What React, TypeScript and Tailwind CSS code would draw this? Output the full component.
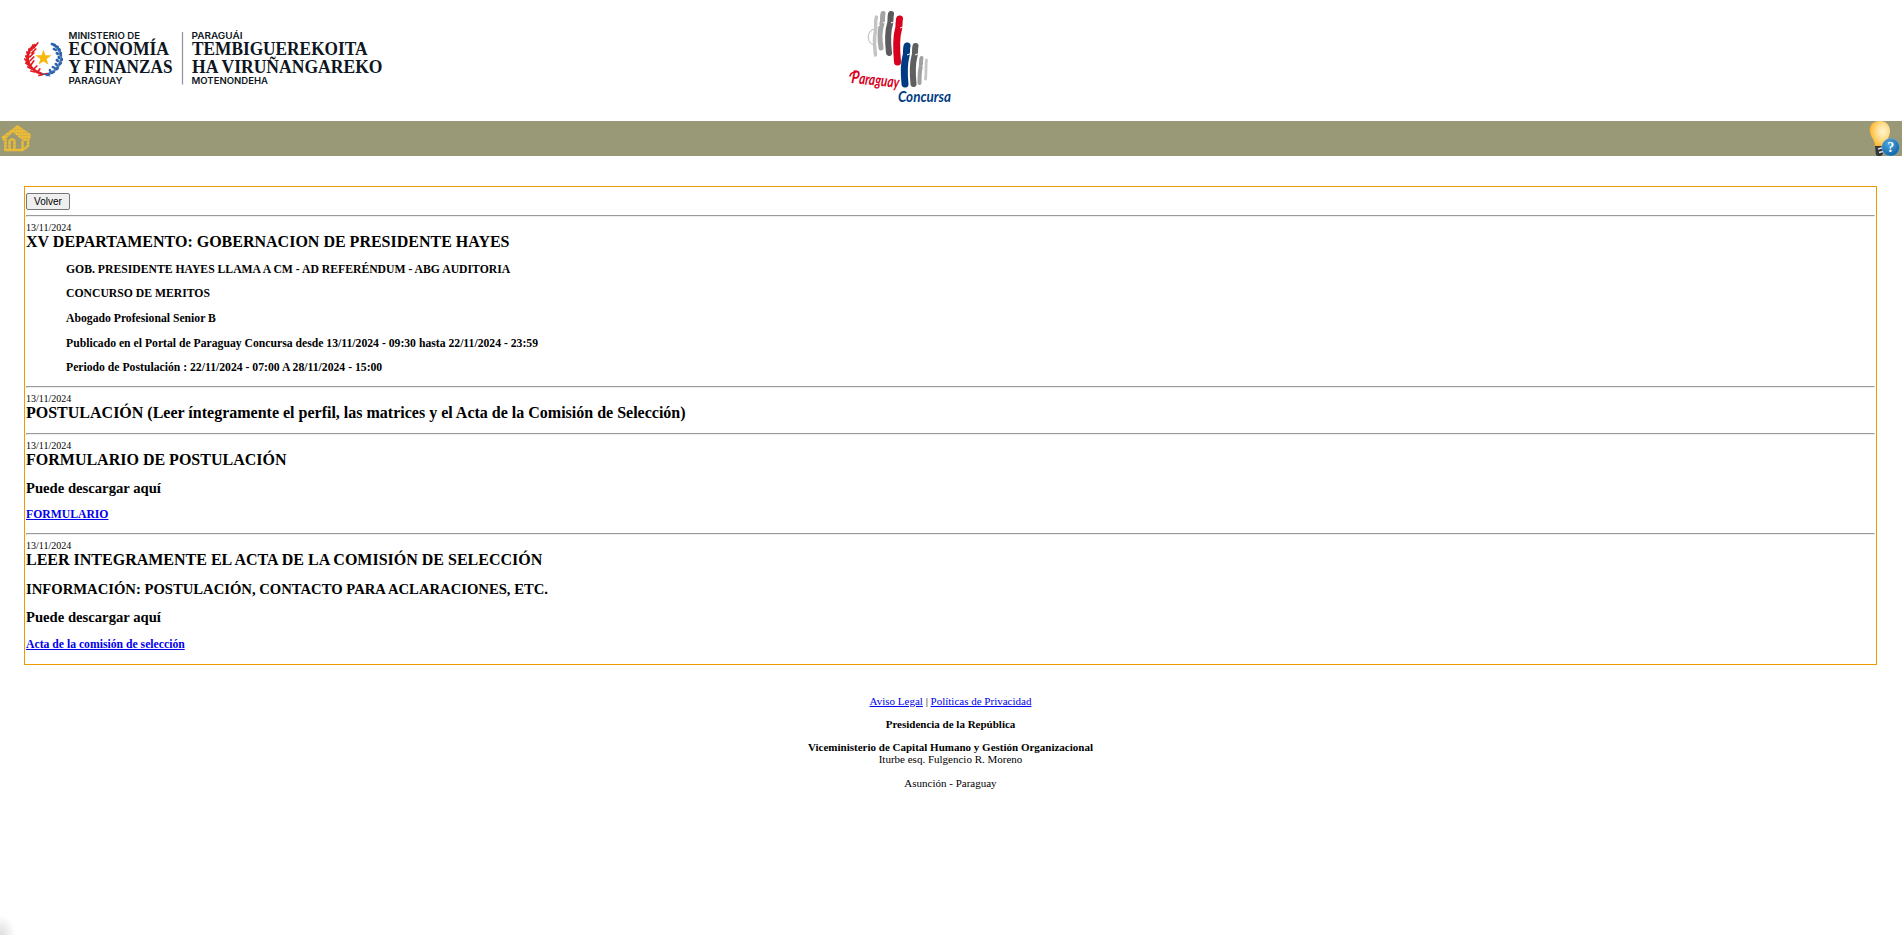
import React from "react";

const serif = "'Liberation Serif', serif";
const sans = "Lato, sans-serif";

function MinistryLogo() {
  return (
    <svg width="370" height="70" viewBox="20 22 370 70" className="block" role="img" aria-label="Ministerio de Economía y Finanzas">
      <g fill="none" strokeLinecap="round" transform="translate(.8 0)">
        <path d="M34 45C23 53 24 68 41 74" stroke="#e31b23" strokeWidth="2.600" />
        <path d="M33 48l4-5M31 50l1-5M29 53l-1-4M28 56l-2-4M27 60l-2-4M27 63l-3-4M29 66l-4-3M31 69l-4-2M34 72l-4-1M31 53l4-4M29 57l4-4M29 61l4-4M30 65l3-4M33 69l3-3M37 72l2-3" stroke="#e31b23" strokeWidth="1.700" />
        <path d="M53 45C64 53 63 68 46 75" stroke="#5d86c2" strokeWidth="2.600" />
        <path d="M51 44l3 1M55 46l2 1M53 49l2 1M58 49l1 1M56 53l1 1M60 53l0 2M58 57l0 1M61 59l0 1M56 60l1 1M60 63l-1 1M55 64l1 1M57 68l-1 1M52 67l2 1M53 72l-2 1M49 70l1 2M47 74l1 0" stroke="#2f62ae" strokeWidth="2.500" />
        <path d="M38 75.500l8-2" stroke="#e31b23" strokeWidth="1.300" />
        <path d="M41 73.500l8 2.500" stroke="#2f62ae" strokeWidth="1.200" />
      </g>
      <path d="M43.500 49.500l1.900 5.800h6.200l-5 3.600 1.900 5.900-5-3.600-5 3.600 1.900-5.900-5-3.600h6.200z" fill="#f8b90c" />
      <g fill="#0d1621" fontFamily="Inter, sans-serif" fontWeight="600" fontSize="8.400">
        <text x="68.500" y="38.500" textLength="71.500" lengthAdjust="spacingAndGlyphs">MINISTERIO DE</text>
        <text x="68.500" y="84.300" textLength="54" lengthAdjust="spacingAndGlyphs">PARAGUAY</text>
        <text x="191.500" y="38.500" textLength="51" lengthAdjust="spacingAndGlyphs">PARAGUÁI</text>
        <text x="191.500" y="84.300" textLength="76.500" lengthAdjust="spacingAndGlyphs">MOTENONDEHA</text>
      </g>
      <g fill="#0d1621" fontFamily={serif} fontWeight="700" fontSize="18">
        <text x="68.500" y="55.300" textLength="100.500" lengthAdjust="spacingAndGlyphs">ECONOMÍA</text>
        <text x="68.500" y="73.200" textLength="104" lengthAdjust="spacingAndGlyphs">Y FINANZAS</text>
        <text x="192" y="55.300" textLength="175.500" lengthAdjust="spacingAndGlyphs">TEMBIGUEREKOITA</text>
        <text x="192" y="73.200" textLength="190.500" lengthAdjust="spacingAndGlyphs">HA VIRUÑANGAREKO</text>
      </g>
      <path d="M182.500 32v52.500" stroke="#8d9297" strokeWidth="1.200" />
    </svg>
  );
}

function ConcursaLogo() {
  return (
    <svg width="120" height="110" viewBox="840 0 120 110" className="block" role="img" aria-label="Paraguay Concursa">
      <g fill="none" strokeLinecap="round">
        <path d="M875 29C866 30 866 44 875 45" stroke="#c9c9c9" strokeWidth="1.300" />
        <path d="M876.500 17c-2 5 0 8-1 14-2 8-1 15 0 24" stroke="#c4c4c4" strokeWidth="3.500" />
        <path d="M883 13.500c-1 5 0 7-1 10-3 8-2 18-1 24.500" stroke="#a4a4a4" strokeWidth="5" />
        <path d="M891 14c-1 4 0 7-1 10-3 9-2 20-1 29" stroke="#5b5b5e" strokeWidth="6" />
        <path d="M899.500 19c-1 4 0 7-1 10-3 10-2 22-1 33" stroke="#d9001d" strokeWidth="7" />
        <path d="M907 46c-1 4 0 7-1 10-2.500 9-2 18-1 28" stroke="#003b84" strokeWidth="7" />
        <path d="M915.500 46c-1 4 0 7-1 10-2.500 9-2 18-1 28" stroke="#5f5f62" strokeWidth="6" />
        <path d="M921.500 58c-1 4 0 7-1 10-1 5-1 10-1 15" stroke="#a0a0a0" strokeWidth="4" />
        <path d="M926.500 60c-1 5 0 10-1 19" stroke="#c6c6c6" strokeWidth="2.800" />
      </g>
      <g fill="none" stroke="#fff" strokeWidth="1">
        <path d="M883 23l4-2M891 23l5-2M900 28l5-2M907 55l5-2M915 55l5-2M922 66l3-1M877 26l3-1" />
      </g>
      <text x="851" y="83" transform="rotate(6 851 83)" textLength="48" lengthAdjust="spacingAndGlyphs" fill="#d9001d" fontFamily={sans} fontStyle="italic" fontWeight="700" fontSize="16"><tspan fontSize="18">P</tspan>araguay</text>
      <path d="M850 76q1-4 6-4" fill="none" stroke="#d9001d" strokeWidth="1.500" strokeLinecap="round" />
      <text x="898" y="102" textLength="53" lengthAdjust="spacingAndGlyphs" fill="#003b84" fontFamily={sans} fontStyle="italic" fontWeight="700" fontSize="14.500">Concursa</text>
    </svg>
  );
}

function HomeIcon() {
  return (
    <svg width="32" height="35" viewBox="0 121 32 35" className="block" aria-label="Inicio">
      <path d="M1.500 137L17.500 125 30.500 134v4.500l-6.500 3-11-9-10 8.500z" fill="#f0bd33" />
      <g fill="none" stroke="#f0bd33" strokeWidth="2.600" strokeLinejoin="round">
        <path d="M5.500 138v12h17v-9M9.500 150v-9q3-4 5 0v9M28 137v9l-5.500 4" />
      </g>
      <path d="M2 129.500h28M2 132.500h28M2 135.500h28M2 138.500h28M2 141.500h28M2 144.500h28M2 147.500h28M6 125v26M9 125v26M12 125v26M15 125v26M18 125v26M21 125v26M24 125v26M27 125v26" stroke="#999977" strokeWidth=".25" />
    </svg>
  );
}

function HelpIcon() {
  return (
    <svg width="34" height="35" viewBox="1868 121 34 35" className="block" aria-label="Ayuda">
      <defs>
        <radialGradient id="bulb" cx=".65" cy=".42" r=".65">
          <stop offset="0" stopColor="#fff6d5" />
          <stop offset=".5" stopColor="#ffdc8a" />
          <stop offset="1" stopColor="#ffb52c" />
        </radialGradient>
        <radialGradient id="ball" cx=".4" cy=".3" r=".7">
          <stop offset="0" stopColor="#4da7dd" />
          <stop offset="1" stopColor="#1464a6" />
        </radialGradient>
      </defs>
      <path d="M1875 146h8v8q-3 4-7 1z" fill="#34353a" />
      <path d="M1878 149l5-1.500M1879 152.500l4-1" stroke="#e5e5e5" strokeWidth="1.500" />
      <path d="M1880 121c-8 0-11 5-10 11 1 6 5 8 5 14h10c1-6 5-9 5-15 0-6-4-10-10-10z" fill="url(#bulb)" />
      <circle cx="1890.700" cy="147.300" r="8.800" fill="url(#ball)" stroke="#6ea9ce" strokeWidth=".7" />
      <text x="1890.700" y="151.800" textAnchor="middle" fill="#fff" fontFamily={serif} fontWeight="700" fontSize="14">?</text>
    </svg>
  );
}

function Rule() {
  return <div className="h-0.5 border border-[#eeeeee] border-t-[#9a9a9a] border-l-[#9a9a9a]" />;
}

function Stamp() {
  return <div className="pt-[5px] text-[10px] leading-[11px]">13/11/2024</div>;
}

function Title({ children }: { children: React.ReactNode }) {
  return <h2 className="text-[16px] leading-[18px] font-bold">{children}</h2>;
}

export default function App() {
  return (
    <div className="relative flex min-h-[935px] flex-col overflow-hidden bg-white font-['Liberation_Serif',serif] text-black">
      <header className="grid h-[121px] grid-cols-[840px_120px_1fr]">
        <div className="pt-[22px] pl-5"><MinistryLogo /></div>
        <ConcursaLogo />
      </header>
      <nav className="flex h-[35px] justify-between bg-[#999977]">
        <a href="#"><HomeIcon /></a>
        <a href="#"><HelpIcon /></a>
      </nav>

      <main className="mt-[30px] mr-[25px] ml-6 h-[479px] border border-[#ee9a00] px-px pt-1.5">
        <button className="mb-[5px] block h-[17px] w-11 rounded-[2px] border border-[#767676] bg-[#efefef] text-center font-['Liberation_Sans',sans-serif] text-[10px] leading-[15px]">Volver</button>
        <Rule />
        <section className="h-[169px]">
          <Stamp />
          <Title>XV DEPARTAMENTO: GOBERNACION DE PRESIDENTE HAYES</Title>
          <div className="mt-3 ml-10 text-[11.69px] leading-[13px] font-bold">
            <p>GOB. PRESIDENTE HAYES LLAMA A CM - AD REFERÉNDUM - ABG AUDITORIA</p>
            <p className="mt-[11px]">CONCURSO DE MERITOS</p>
            <p className="mt-3">Abogado Profesional Senior B</p>
            <p className="mt-3">Publicado en el Portal de Paraguay Concursa desde 13/11/2024 - 09:30 hasta 22/11/2024 - 23:59</p>
            <p className="mt-[11px]">Periodo de Postulación : 22/11/2024 - 07:00 A 28/11/2024 - 15:00</p>
          </div>
        </section>
        <Rule />
        <section className="h-[45px]">
          <Stamp />
          <Title>POSTULACIÓN (Leer íntegramente el perfil, las matrices y el Acta de la Comisión de Selección)</Title>
        </section>
        <Rule />
        <section className="h-[98px]">
          <Stamp />
          <Title>FORMULARIO DE POSTULACIÓN</Title>
          <h3 className="mt-[11px] text-[14.66px] leading-4 font-bold">Puede descargar aquí</h3>
          <p className="mt-3 text-[11.69px] leading-[13px] font-bold"><a href="#" className="text-[#0000ee] underline">FORMULARIO</a></p>
        </section>
        <Rule />
        <section>
          <Stamp />
          <Title>LEER INTEGRAMENTE EL ACTA DE LA COMISIÓN DE SELECCIÓN</Title>
          <h3 className="mt-3 text-[14.66px] leading-4 font-bold">INFORMACIÓN: POSTULACIÓN, CONTACTO PARA ACLARACIONES, ETC.</h3>
          <h3 className="mt-3 text-[14.66px] leading-4 font-bold">Puede descargar aquí</h3>
          <p className="mt-[13px] text-[11.69px] leading-[13px] font-bold"><a href="#" className="text-[#0000ee] underline">Acta de la comisión de selección</a></p>
        </section>
      </main>

      <footer className="mt-[30px] mr-px text-center text-[11px] leading-3">
        <p><a href="#" className="text-[#0000ee] underline">Aviso Legal</a> | <a href="#" className="text-[#0000ee] underline">Políticas de Privacidad</a></p>
        <p className="mt-[11px] font-bold">Presidencia de la República</p>
        <p className="mt-[11px] font-bold">Viceministerio de Capital Humano y Gestión Organizacional</p>
        <p>Iturbe esq. Fulgencio R. Moreno</p>
        <p className="mt-3">Asunción - Paraguay</p>
      </footer>
      <div className="absolute bottom-0 left-0 h-5 w-4 bg-[radial-gradient(ellipse_at_bottom_left,#dddddd,transparent_70%)]" />
    </div>
  );
}
